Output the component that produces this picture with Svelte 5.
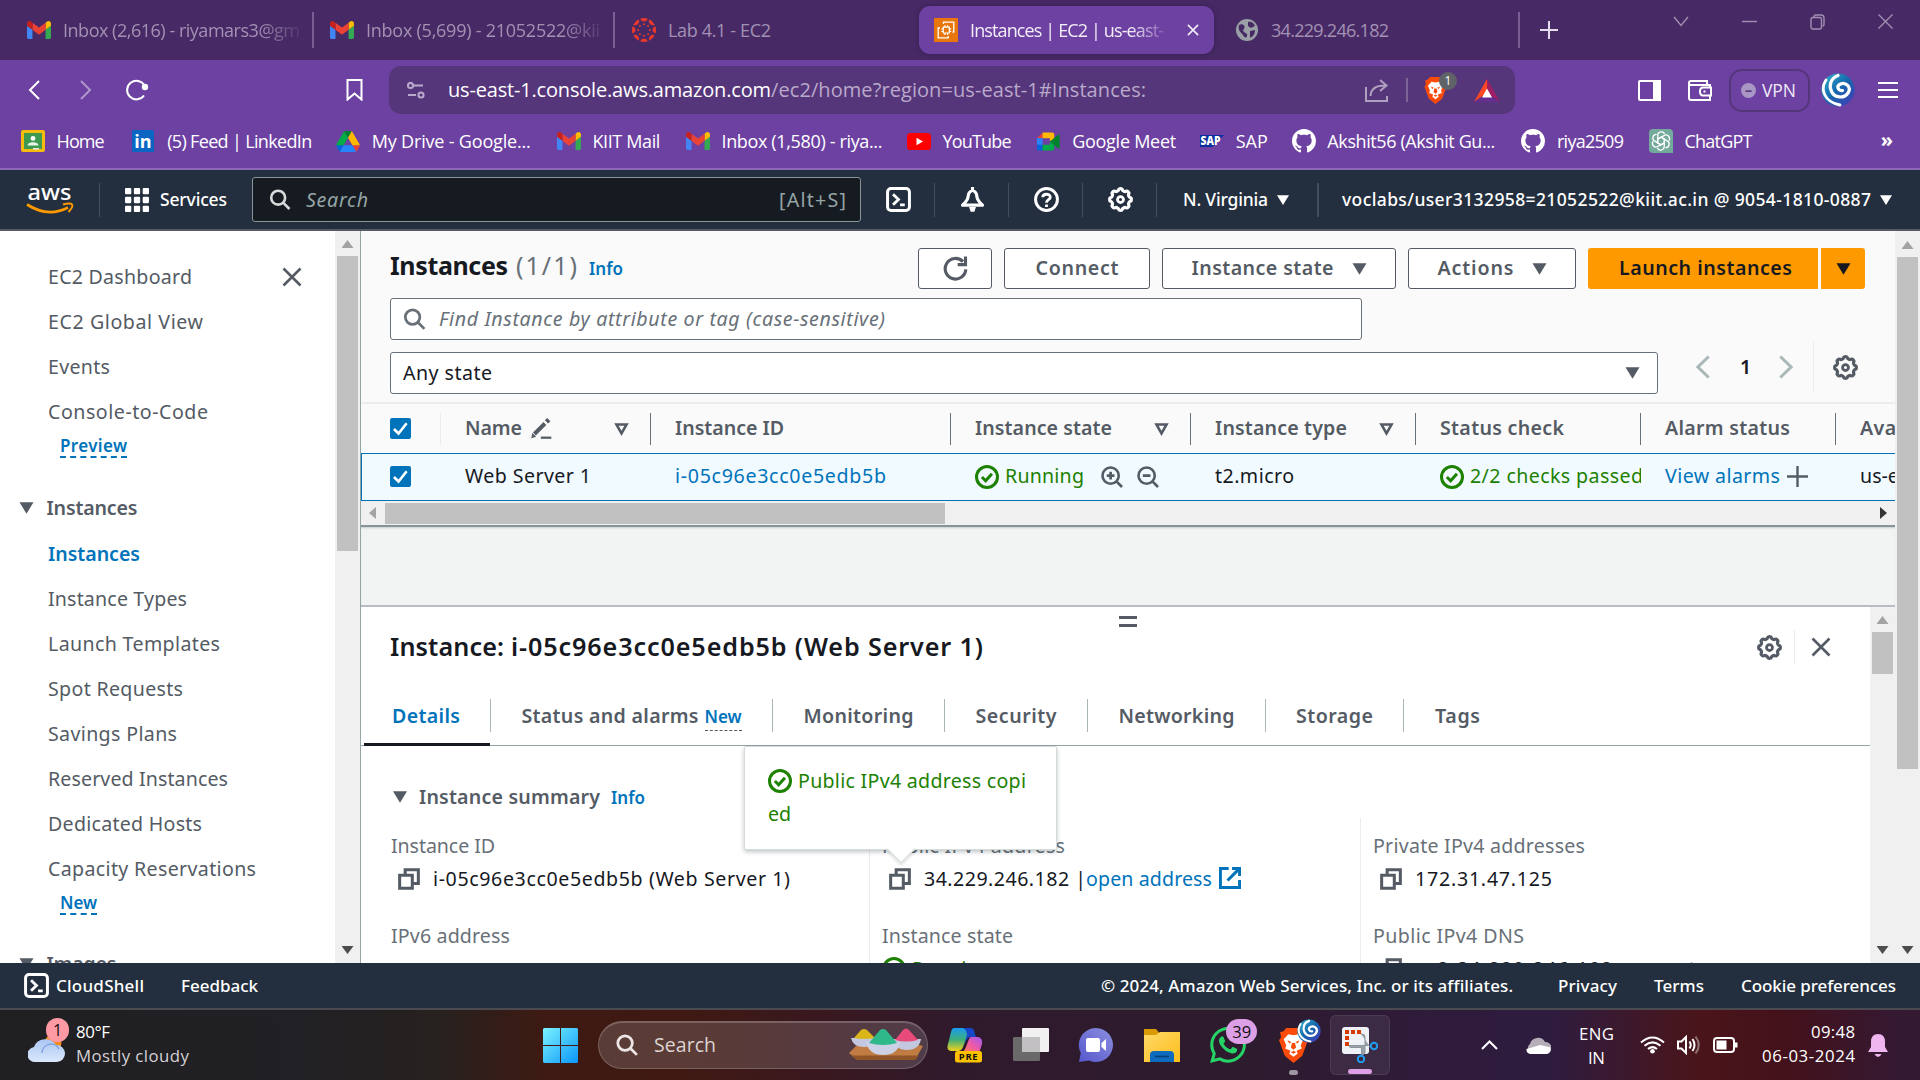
<script>
  // Spreads a label's letters so that it fills the given width.
  function fit(node, width) {
    const natural = node.getBoundingClientRect().width;
    const gaps = Math.max(1, node.textContent.length - 1);
    node.style.letterSpacing = (width - natural) / gaps + 'px';
    node.style.width = width + 'px';
  }

  // Scalloped gear outline with eight teeth, centred on 8,8.
  function gear() {
    let d = '';
    for (let i = 0; i < 96; i++) {
      const a = (i / 96) * Math.PI * 2;
      const r = 6.35 + 0.62 * Math.tanh(2 * Math.cos(8 * a));
      d += (i ? 'L' : 'M') + (8 + r * Math.cos(a)).toFixed(2) + ' ' + (8 + r * Math.sin(a)).toFixed(2);
    }
    return d + 'Z';
  }
  const gearPath = gear();
  const spokes = [0, 45, 90, 135, 180, 225, 270, 315];
  const petals = [0, 60, 120, 180, 240, 300];

  const bookmarks = [
    { icon: 'home', label: 'Home', w: 48, gap: 27 },
    { icon: 'linkedin', label: '(5) Feed | LinkedIn', w: 145, gap: 24 },
    { icon: 'drive', label: 'My Drive - Google...', w: 159, gap: 26 },
    { icon: 'gmail', label: 'KIIT Mail', w: 68, gap: 25.5 },
    { icon: 'gmail', label: 'Inbox (1,580) - riya...', w: 161, gap: 24.5 },
    { icon: 'youtube', label: 'YouTube', w: 69, gap: 25 },
    { icon: 'meet', label: 'Google Meet', w: 104, gap: 24 },
    { icon: 'sap', label: 'SAP', w: 32, gap: 24 },
    { icon: 'github', label: 'Akshit56 (Akshit Gu...', w: 168, gap: 26 },
    { icon: 'github', label: 'riya2509', w: 67, gap: 25 },
    { icon: 'chatgpt', label: 'ChatGPT', w: 68, gap: 0 }
  ];
  const navTop = [
    ['EC2 Dashboard', 144],
    ['EC2 Global View', 155],
    ['Events', 62],
    ['Console-to-Code', 160]
  ];
  const navItems = [
    ['Instance Types', 139],
    ['Launch Templates', 172],
    ['Spot Requests', 135],
    ['Savings Plans', 129],
    ['Reserved Instances', 180],
    ['Dedicated Hosts', 154],
    ['Capacity Reservations', 208]
  ];
  const tabs = [
    ['Monitoring', 110, 172],
    ['Security', 81, 143],
    ['Networking', 116, 178],
    ['Storage', 77, 138]
  ];
  const apps = ['copilot', 'taskview', 'chat', 'folder', 'whatsapp', 'brave', 'snip'];
</script>

{#snippet t(text, w, cls)}<span class="t {cls}" use:fit={w}>{text}</span>{/snippet}

{#snippet icon(name, w, h, cls)}
  <svg class="ic {cls}" width={w} height={h} viewBox="0 0 16 16" fill="none" stroke="currentColor" stroke-width="2">
    {#if name === 'gear'}
      <path d={gearPath} /><circle cx="8" cy="8" r="1.9" stroke-width="1.8" />
    {:else if name === 'search'}
      <circle cx="6.6" cy="6.6" r="5.3" /><path d="M10.4 10.4 15.2 15.2" />
    {:else if name === 'x'}
      <path d="M1.2 1.2 14.8 14.8M14.8 1.2 1.2 14.8" stroke-width="2.1" />
    {:else if name === 'down'}
      <path d="M0 1.5H16L8 14.5Z" fill="currentColor" stroke="none" />
    {:else if name === 'sort'}
      <path d="M2.2 2.8H13.8L8 13Z" stroke-width="2.9" />
    {:else if name === 'ok'}
      <circle cx="8" cy="8" r="7" /><path d="M4.6 8 7.1 10.5 11.3 5.8" />
    {:else if name === 'copy'}
      <path d="M1.2 5.2H10.4V14.8H1.2ZM5.2 5V1.2H14.8V11.3H10.6" stroke-width="2.2" />
    {:else if name === 'external'}
      <path d="M7 1H1V15H15V9.5M9.5 1H15V6.5M15 1 6.2 9.8" stroke-width="2.2" />
    {:else if name === 'zoomin' || name === 'zoomout'}
      <circle cx="7" cy="7" r="5.9" stroke-width="1.9" /><path d="M11.2 11.2 15.3 15.3M4.2 7H9.8" />
      {#if name === 'zoomin'}<path d="M7 4.2V9.8" />{/if}
    {:else if name === 'plus'}
      <path d="M8 0V16M0 8H16" stroke-width="1.8" />
    {:else if name === 'edit'}
      <path d="M2.6 12.2 10.6 4.2" stroke-width="3" /><path d="M11.8 3 13.6 1.2" stroke-width="3.4" /><path d="M.2 15.4 1 11.5 3.9 14.2Z" fill="currentColor" stroke="none" /><path d="M7.5 15H15.5" stroke-width="1.7" />
    {:else if name === 'refresh'}
      <path d="M14.6 8.6A6.6 6.6 0 1 1 12.8 3.6" /><path d="M14.4 .3V5.5H9.4" />
    {:else if name === 'left'}
      <path d="M11.8 1 4.6 8 11.8 15" />
    {:else if name === 'right'}
      <path d="M4.2 1 11.4 8 4.2 15" />
    {:else if name === 'shell'}
      <rect x="1" y="1" width="14" height="14" rx="2.2" stroke-width="1.9" /><path d="M4.5 4.6 8 8 4.5 11.4M9 11.4H12" stroke-width="1.8" />
    {:else if name === 'bell'}
      <path d="M8 0V2.4M8 2C5.8 3 5.2 4.6 5.2 6.2 5 8.6 3.6 9.8 1.6 11.6H14.4C12.4 9.8 11 8.6 10.8 6.2 10.8 4.6 10.2 3 8 2Z" stroke-width="2" stroke-linejoin="round" /><path d="M5.8 12.8H10.2L9.2 15.8H6.8Z" fill="currentColor" stroke="none" />
    {:else if name === 'help'}
      <circle cx="8" cy="8" r="7" stroke-width="1.9" /><path d="M5.6 6.6C5.6 4 10.4 4 10.4 6.5 10.4 8.2 8 8 8 10M8 11.2V12.8" stroke-width="1.8" />
    {:else if name === 'grid'}
      {#each [0, 5.9, 11.8] as y}{#each [0, 5.9, 11.8] as x}<rect {x} {y} width="4.2" height="4.2" rx=".7" fill="currentColor" stroke="none" />{/each}{/each}
    {:else if name === 'check'}
      <rect width="16" height="16" rx="1.6" fill="#0073bb" stroke="none" /><path d="M3 8.4 6.5 11.8 12.7 4" stroke="#fff" />
    {/if}
  </svg>
{/snippet}

{#snippet brand(name)}
  {#if name === 'gmail'}
    <svg class="ic" width="24" height="18" viewBox="52 42 88 66">
      <path fill="#4285f4" d="M58 108h14V74L52 59v43c0 3.32 2.69 6 6 6" /><path fill="#34a853" d="M120 108h14c3.32 0 6-2.69 6-6V59l-20 15" /><path fill="#fbbc04" d="M120 48v26l20-15v-8c0-7.42-8.47-11.65-14.4-7.2" /><path fill="#ea4335" d="M72 74V48l24 18 24-18v26L96 92" /><path fill="#c5221f" d="M52 51v8l20 15V48l-5.6-4.2c-5.94-4.45-14.4-.22-14.4 7.2" />
    </svg>
  {:else if name === 'home'}
    <svg class="ic" width="24" height="22" viewBox="0 0 24 22">
      <rect width="24" height="22" rx="2" fill="#f6bc0d" /><rect x="3" y="3" width="18" height="16" fill="#3d9a50" /><circle cx="12" cy="8.4" r="2.4" fill="#fff" /><path d="M6.5 15.5C6.5 11 17.5 11 17.5 15.5Z" fill="#e7f4e9" /><rect x="12" y="18" width="6" height="1.6" fill="#e8e8e8" />
    </svg>
  {:else if name === 'linkedin'}
    <svg class="ic" width="22" height="22" viewBox="0 0 22 22">
      <rect width="22" height="22" rx="1.5" fill="#0a66c2" /><text x="11" y="17.8" text-anchor="middle" font-family="Open Sans" font-weight="700" font-size="18" fill="#fff">in</text>
    </svg>
  {:else if name === 'drive'}
    <svg class="ic" width="24" height="21" viewBox="0 0 87.3 78">
      <path d="m6.6 66.85 3.85 6.65c.8 1.4 1.95 2.5 3.3 3.3l13.75-23.8h-27.5c0 1.55.4 3.1 1.2 4.5z" fill="#0066da" /><path d="m43.65 25-13.75-23.8c-1.35.8-2.5 1.9-3.3 3.3l-25.4 44a9.06 9.06 0 0 0-1.2 4.5h27.5z" fill="#00ac47" /><path d="m73.55 76.8c1.35-.8 2.5-1.9 3.3-3.3l1.6-2.75 7.65-13.25c.8-1.4 1.2-2.95 1.2-4.5h-27.502l5.852 11.5z" fill="#ea4335" /><path d="m43.65 25 13.75-23.8c-1.35-.8-2.9-1.2-4.5-1.2h-18.5c-1.6 0-3.15.45-4.5 1.2z" fill="#00832d" /><path d="m59.8 53h-32.3l-13.75 23.8c1.35.8 2.9 1.2 4.5 1.2h50.8c1.6 0 3.15-.45 4.5-1.2z" fill="#2684fc" /><path d="m73.4 26.5-12.7-22c-.8-1.4-1.95-2.5-3.3-3.3l-13.75 23.8 16.15 28h27.45c0-1.55-.4-3.1-1.2-4.5z" fill="#ffba00" />
    </svg>
  {:else if name === 'youtube'}
    <svg class="ic" width="24" height="17" viewBox="0 0 24 17"><rect width="24" height="17" rx="3.6" fill="#f00" /><path d="M9.5 4.8 16 8.5 9.5 12.2Z" fill="#fff" /></svg>
  {:else if name === 'meet'}
    <svg class="ic" width="23" height="19" viewBox="0 0 24 19">
      <path d="M0 6 5.8 0V6Z" fill="#ea4335" /><path d="M0 6H5.8V13H0Z" fill="#2684fc" /><path d="M0 13H5.8V19H2Q0 19 0 17Z" fill="#0066da" /><path d="M5.8 0H16Q18 0 18 2V7L13.5 9.5V6H5.8Z" fill="#ffba00" /><path d="M5.8 13H13.5V9.5L18 13V17Q18 19 16 19H5.8Z" fill="#00ac47" /><path d="M13.5 9.5 22 2.4Q23.6 1.8 23.6 3.2V15.8Q23.6 17.2 22 16.6Z" fill="#00832d" />
    </svg>
  {:else if name === 'sap'}
    <svg class="ic" width="24" height="12" viewBox="0 0 24 12"><path d="M0 0H24L12.5 12H0Z" fill="#0a2f9c" /><text x="0.5" y="10" font-family="Open Sans" font-weight="800" font-size="11.5" textLength="20" lengthAdjust="spacingAndGlyphs" fill="#fff">SAP</text></svg>
  {:else if name === 'github'}
    <svg class="ic" width="24" height="24" viewBox="0 0 16 16"><path fill="#fff" d="M8 0C3.58 0 0 3.58 0 8c0 3.54 2.29 6.53 5.47 7.59.4.07.55-.17.55-.38 0-.19-.01-.82-.01-1.49-2.01.37-2.53-.49-2.69-.94-.09-.23-.48-.94-.82-1.13-.28-.15-.68-.52-.01-.53.63-.01 1.08.58 1.23.82.72 1.21 1.87.87 2.33.66.07-.52.28-.87.51-1.07-1.78-.2-3.64-.89-3.64-3.95 0-.87.31-1.59.82-2.15-.08-.2-.36-1.02.08-2.12 0 0 .67-.21 2.2.82.64-.18 1.32-.27 2-.27s1.36.09 2 .27c1.53-1.04 2.2-.82 2.2-.82.44 1.1.16 1.92.08 2.12.51.56.82 1.27.82 2.15 0 3.07-1.87 3.75-3.65 3.95.29.25.54.73.54 1.48 0 1.07-.01 1.93-.01 2.2 0 .21.15.46.55.38A8.01 8.01 0 0 0 16 8c0-4.42-3.58-8-8-8" /></svg>
  {:else if name === 'chatgpt'}
    <svg class="ic" width="24" height="24" viewBox="0 0 24 24"><path d="M4 0H20Q24 0 24 4V24H4Q0 24 0 20V4Q0 0 4 0Z" fill="#74aa9c" />
      {#each petals as a}<path transform="rotate({a} 12 12)" d="M12 8.2 15.4 10.2V15.6M8.8 10V6.2A3.6 3.6 0 0 1 15.6 4.9" fill="none" stroke="#fff" stroke-width="1.3" />{/each}
    </svg>
  {:else if name === 'canvas'}
    <svg class="ic" width="24" height="24" viewBox="0 0 24 24">
      {#each spokes as a}<g transform="rotate({a} 12 12)" fill="#e9392c"><path d="M8.2 .7Q12-.7 15.8 .7A4 4 0 0 1 8.2 .7Z" /><circle cx="12" cy="6.2" r="1" /></g>{/each}
    </svg>
  {:else if name === 'ec2'}
    <svg class="ic" width="24" height="24" viewBox="0 0 24 24"><rect width="24" height="24" fill="#e8760c" /><path d="M9.5 6V4.2H19.8V14H18.5M6 10H4.2V19.8H14.2V18" fill="none" stroke="#fff" stroke-width="1.3" /><path d="M9.3 9.2H15.3V15H9.3ZM11 7.2V9M13.6 7.2V9M11 15V17M13.6 15V17M15.3 10.8H17.2M15.3 13.4H17.2M7.4 10.8H9.3M7.4 13.4H9.3" fill="none" stroke="#fff" stroke-width="1.2" /></svg>
  {:else if name === 'globe'}
    <svg class="ic" width="22" height="22" viewBox="0 0 22 22"><circle cx="11" cy="11" r="11" fill="#9aa0a6" /><path d="M3 6C6 4 9 6 8.5 8.5S6 11 8 13 12 14 11 17 8 18 7 16 3 13 2.6 9ZM12 3C15 2 18 4 19 7L15 9 12 7ZM14 12 19 11C19 15 17 18 14 18.6Z" fill="#472a65" /></svg>
  {:else if name === 'braveface'}
    <svg class="ic" width="23" height="27" viewBox="0 0 28 34"><path d="M7 0H21L24 3.5 27 4 26 9 28 12 22.5 27 14 34 5.5 27 0 12 2 9 1 4 4 3.5Z" fill="#fb4b0b" /><path d="M14 7 19 6 23.5 11 21 17 22 20 17 22 18 25 14 28 10 25 11 22 6 20 7 17 4.5 11 9 6Z" fill="#fff" /><path d="M8 12 12 13.5 10 15ZM20 12 16 13.5 18 15ZM12.5 14.5H15.5L16.5 19 14 21 11.5 19ZM11.5 23.5 14 22 16.5 23.5 14 25Z" fill="#fb4b0b" /></svg>
  {:else if name === 'swirl'}
    <svg class="ic" width="34" height="34" viewBox="0 0 34 34"><defs><linearGradient id="sw" x1="0" y1="0" x2="1" y2="1"><stop offset="0" stop-color="#35b5cf" /><stop offset=".5" stop-color="#1468ad" /><stop offset="1" stop-color="#4b35b8" /></linearGradient></defs><circle cx="17" cy="17" r="16.6" fill="url(#sw)" /><path d="M17 2.5C10 5 7.5 12 10.5 18.5S23 26 27 20 24.5 8.5 19.5 11 17.5 18 21.5 17.5" fill="none" stroke="#fff" stroke-width="3.2" stroke-linecap="round" /><path d="M5 7C-1 16 3 29 19 32" fill="none" stroke="#fff" stroke-width="2.8" stroke-linecap="round" /></svg>
  {/if}
{/snippet}

{#snippet app(name)}
  {#if name === 'copilot'}
    <svg width="36" height="36" viewBox="0 0 36 36"><defs><linearGradient id="cp1" x1="0" y1="0" x2="0" y2="1"><stop offset="0" stop-color="#1b9cf0" /><stop offset=".5" stop-color="#3cae7a" /><stop offset="1" stop-color="#f2d21c" /></linearGradient><linearGradient id="cp2" x1="1" y1="0" x2="0" y2="1"><stop offset="0" stop-color="#a259f0" /><stop offset=".5" stop-color="#ef5aa6" /><stop offset="1" stop-color="#ff8a3c" /></linearGradient></defs>
      <path d="M7 1H24L16 20Q14.5 24 11 24H4Q-1 23 1 17L4 5Q5 1 7 1Z" fill="url(#cp1)" /><path d="M16 1H24Q27 1 28 7L29 10H23Q20 10 16 20L20 8Q20 3 16 1Z" fill="#1746c8" /><path d="M24 10H31Q36 11 35 17L32 26H14Q17 25 19 20L22 12Q23 10 24 10Z" fill="url(#cp2)" /><rect x="8" y="24" width="27" height="11.5" rx="2.5" fill="#fdc100" /><text x="21.5" y="33" text-anchor="middle" font-family="Open Sans" font-weight="700" font-size="9.5" letter-spacing=".6" fill="#111">PRE</text></svg>
  {:else if name === 'taskview'}
    <svg width="36" height="36" viewBox="0 0 36 36"><rect y="10" width="27" height="24" rx="1" fill="#6a6a6a" /><rect x="9" y="1" width="27" height="24" rx="1" fill="#f1f1f1" /><rect x="9" y="10" width="18" height="15" fill="#c2c0c2" /></svg>
  {:else if name === 'chat'}
    <svg width="36" height="36" viewBox="0 0 36 36"><defs><linearGradient id="ch" x1="0" y1="1" x2="1" y2="0"><stop offset="0" stop-color="#5558cc" /><stop offset="1" stop-color="#8c8fe0" /></linearGradient></defs><path d="M18 1A17 17 0 1 1 11 33.5L1 35 2.8 26A17 17 0 0 1 18 1Z" fill="url(#ch)" /><rect x="8" y="11" width="14" height="14" rx="2" fill="#fff" /><path d="M23.5 16 28 12V24L23.5 20Z" fill="#fff" /></svg>
  {:else if name === 'folder'}
    <svg width="36" height="36" viewBox="0 0 36 36"><defs><linearGradient id="fo" x1="0" y1="0" x2="1" y2="1"><stop offset="0" stop-color="#ffd968" /><stop offset="1" stop-color="#fdbd1c" /></linearGradient></defs><path d="M0 2H12L15 5.5V12H0Z" fill="#d99a05" /><path d="M0 8H12L16 5H36V35H0Z" fill="url(#fo)" /><path d="M6 35V28Q6 24 10 24H26Q30 24 30 28V35Z" fill="#0d6cbd" /><path d="M11 29.5H25" stroke="#0a3f78" stroke-width="1.6" /></svg>
  {:else if name === 'whatsapp'}
    <svg width="36" height="36" viewBox="0 0 24 24"><path fill="#25d366" d="M17.472 14.382c-.297-.149-1.758-.867-2.03-.967-.273-.099-.471-.148-.67.15-.197.297-.767.966-.94 1.164-.173.199-.347.223-.644.075-.297-.15-1.255-.463-2.39-1.475-.883-.788-1.48-1.761-1.653-2.059-.173-.297-.018-.458.13-.606.134-.133.298-.347.446-.52.149-.174.198-.298.298-.497.099-.198.05-.371-.025-.52-.075-.149-.669-1.612-.916-2.207-.242-.579-.487-.5-.669-.51-.173-.008-.371-.01-.57-.01-.198 0-.52.074-.792.372-.272.297-1.04 1.016-1.04 2.479 0 1.462 1.065 2.875 1.213 3.074.149.198 2.096 3.2 5.077 4.487.709.306 1.262.489 1.694.625.712.227 1.36.195 1.871.118.571-.085 1.758-.719 2.006-1.413.248-.694.248-1.289.173-1.413-.074-.124-.272-.198-.57-.347m-5.421 7.403h-.004a9.87 9.87 0 01-5.031-1.378l-.361-.214-3.741.982.998-3.648-.235-.374a9.86 9.86 0 01-1.51-5.26c.001-5.45 4.436-9.884 9.888-9.884 2.64 0 5.122 1.03 6.988 2.898a9.825 9.825 0 012.893 6.994c-.003 5.45-4.437 9.884-9.885 9.884m8.413-18.297A11.815 11.815 0 0012.05 0C5.495 0 .16 5.335.157 11.892c0 2.096.547 4.142 1.588 5.945L.057 24l6.305-1.654a11.882 11.882 0 005.683 1.448h.005c6.554 0 11.89-5.335 11.893-11.893a11.821 11.821 0 00-3.48-8.413Z" /></svg>
    <span class="count">39</span>
  {:else if name === 'brave'}
    <span class="bigbrave">{@render brand('braveface')}</span><span class="miniswirl">{@render brand('swirl')}</span><i class="dot"></i>
  {:else}
    <svg width="36" height="36" viewBox="0 0 36 36"><rect width="27" height="27" rx="3" fill="#eef2f6" /><g fill="#d83b01"><rect x="3" y="3" width="4" height="4" /><rect x="9" y="3" width="4" height="4" /><rect x="15" y="3" width="4" height="4" /><rect x="3" y="9" width="4" height="4" /><rect x="3" y="15" width="4" height="4" /></g><path d="M19 7H20Q23 7 23 10V26L19.5 29V20.5H9Q7 20.5 7 18.5H27L29 21" fill="#9aa1a8" stroke="#8d959c" stroke-width="1" /><circle cx="32" cy="19" r="3.2" fill="none" stroke="#1f9df1" stroke-width="2" /><circle cx="19" cy="32" r="3.2" fill="none" stroke="#1f9df1" stroke-width="2" /></svg>
    <i class="dot wide"></i>
  {/if}
{/snippet}

<div class="screen">
  <div class="tabbar">
    <div class="btab first">{@render brand('gmail')}<span class="fade">{@render t('Inbox (2,616) - riyamars3@gm', 237, 'w')}</span></div>
    <div class="btab second">{@render brand('gmail')}<span class="fade">{@render t('Inbox (5,699) - 21052522@kii', 234, 'w')}</span></div>
    <div class="btab third">{@render brand('canvas')}{@render t('Lab 4.1 - EC2', 103, 'w')}</div>
    <div class="btab active">{@render brand('ec2')}<span class="fade short">{@render t('Instances | EC2 | us-east-', 194, 'w')}</span>{@render icon('x', 12, 12, '')}</div>
    <div class="btab fifth">{@render brand('globe')}{@render t('34.229.246.182', 118, 'w')}</div>
    <div class="newtab">{@render icon('plus', 18, 18, '')}</div>
    <div class="winctl">
      <svg width="16" height="11" viewBox="0 0 16 11"><path d="M1 1 8 9.5 15 1" /></svg>
      <svg width="15" height="11" viewBox="0 0 15 11"><path d="M0 5.5H15" /></svg>
      <svg width="15" height="16" viewBox="0 0 15 16"><path d="M4 3.5V2.5Q4 1 5.5 1H11Q14 1 14 4V10.5Q14 12 12.5 12" /><rect x="1" y="3.5" width="10.5" height="11.5" rx="2" /></svg>
      <svg width="15" height="15" viewBox="0 0 15 15"><path d="M.5.5 14.5 14.5M14.5.5.5 14.5" /></svg>
    </div>
  </div>

  <div class="toolbar">
    <div class="tools">
      <svg class="back" width="12" height="20" viewBox="0 0 12 20"><path d="M11 1 2 10 11 19" /></svg>
      <svg class="fwd" width="12" height="20" viewBox="0 0 12 20"><path d="M1 1 10 10 1 19" /></svg>
      <svg class="reload" width="24" height="22" viewBox="0 0 24 22"><path d="M19 16.5A9.3 9.3 0 1 1 19.5 6.5" /><circle cx="20" cy="8" r="3.2" fill="#fff" stroke="none" /></svg>
      <svg class="mark" width="17" height="22" viewBox="0 0 17 22"><path d="M1.5 1H15.5V20.5L8.5 14.5 1.5 20.5Z" /></svg>
      <div class="url">
        <svg class="site" width="18" height="17" viewBox="0 0 18 17"><circle cx="3.5" cy="3.5" r="2.6" /><path d="M6.5 3.5H16M1 13H9" /><circle cx="14" cy="13" r="2.6" /></svg>
        {@render t('us-east-1.console.aws.amazon.com', 323, 'u strong')}{@render t('/ec2/home?region=us-east-1#Instances:', 375, 'u')}
        <svg class="share" width="24" height="23" viewBox="0 0 24 23"><path d="M1 8V22H22V17M5.5 17Q6 6.5 20 6.5M15 1 21.5 6.5 15 12" /></svg>
        <i class="usep"></i>
        <span class="shield">{@render brand('braveface')}<b>1</b></span>
        <svg class="bat" width="26" height="23" viewBox="0 0 26 23"><path d="M13 0 0 23 13 14Z" fill="#ff4724" /><path d="M13 0 26 23 13 14Z" fill="#9e1f63" /><path d="M0 23H26L13 14Z" fill="#662d91" /><path d="M13 9.5 18 18.5H8Z" fill="#fff" /></svg>
      </div>
      <svg class="side" width="23" height="21" viewBox="0 0 23 21"><rect x="1" y="1" width="21" height="19" rx="1" /><path d="M16 1H22V20H16Z" fill="#fff" /></svg>
      <svg class="wallet" width="24" height="21" viewBox="0 0 24 21"><path d="M22 7V5H3Q1 5 1 3T3 1H19V4M1 3V18Q1 20 3 20H22V16" /><path d="M23 7.5H15Q12 7.5 12 11.5T15 15.5H23ZM15.5 11.5H17.5" /></svg>
      <div class="vpn"><i>–</i>{@render t('VPN', 34, 'v')}</div>
      <span class="avatar">{@render brand('swirl')}</span>
      <svg class="menu" width="20" height="16" viewBox="0 0 20 16"><path d="M0 1H20M0 8H20M0 15H20" /></svg>
    </div>
    <div class="marks">
      {#each bookmarks as b}
        <div class="bm" style:margin-right="{b.gap}px"><span class="bi">{@render brand(b.icon)}</span>{@render t(b.label, b.w, 'w')}</div>
      {/each}
      <span class="more">»</span>
    </div>
  </div>

  <div class="awsnav">
    <svg class="logo" width="48" height="30" viewBox="0 0 48 30"><text x="1.5" y="15" font-family="Noto Sans" font-size="22" font-weight="500" textLength="44" lengthAdjust="spacingAndGlyphs" fill="#fff">aws</text><path d="M1 19.5Q22 33 42 22.5" fill="none" stroke="#f90" stroke-width="2.8" /><path d="M37 19.5Q44.5 17.5 46 19.5T42.5 27" fill="none" stroke="#f90" stroke-width="2" /></svg>
    <i class="nsep n1"></i>
    <span class="g">{@render icon('grid', 24, 24, '')}</span>
    {@render t('Services', 67, 'nav')}
    <div class="navsearch">{@render icon('search', 22, 21, '')}{@render t('Search', 62, 'it')}{@render t('[Alt+S]', 67, 'alt')}</div>
    <span class="nicon c1">{@render icon('shell', 25, 25, '')}</span>
    <i class="nsep"></i>
    <span class="nicon">{@render icon('bell', 25, 25, '')}</span>
    <i class="nsep"></i>
    <span class="nicon">{@render icon('help', 25, 25, '')}</span>
    <i class="nsep"></i>
    <span class="nicon">{@render icon('gear', 25, 25, '')}</span>
    <i class="nsep"></i>
    <div class="region">{@render t('N. Virginia', 85, 'nav')}{@render icon('down', 12, 12, '')}</div>
    <i class="nsep bold"></i>
    <div class="account">{@render t('voclabs/user3132958=21052522@kiit.ac.in @ 9054-1810-0887', 529, 'nav')}{@render icon('down', 12, 12, '')}</div>
  </div>

  <div class="body">
    <nav class="sidebar">
      <div class="links">
        {#each navTop as [label, w], i}
          <div class="link">{@render t(label, w, '')}{#if i === 0}{@render icon('x', 20, 20, 'close')}{/if}</div>
        {/each}
        <div class="tag">{@render t('Preview', 67, 'sm')}</div>
        <div class="section">{@render icon('down', 15, 14, '')}{@render t('Instances', 91, 'b')}</div>
        <div class="link current">{@render t('Instances', 92, 'b')}</div>
        {#each navItems as [label, w]}
          <div class="link">{@render t(label, w, '')}</div>
        {/each}
        <div class="tag">{@render t('New', 37, 'sm')}</div>
        <div class="section images">{@render icon('down', 15, 14, '')}{@render t('Images', 70, 'b')}</div>
      </div>
      <div class="vscroll s1"><i class="up"></i><i class="thumb"></i><i class="dn"></i></div>
    </nav>

    <main>
      <section class="listhead">
        <div class="titlerow">
          {@render t('Instances', 118, 'h1')}{@render t('(1/1)', 61, 'h1 cnt')}{@render t('Info', 34, 'sm blue')}
          <div class="btns">
            <div class="btn r">{@render icon('refresh', 25, 25, '')}</div>
            <div class="btn c">{@render t('Connect', 83, 'b')}</div>
            <div class="btn s">{@render t('Instance state', 142, 'b')}{@render icon('down', 15, 14, '')}</div>
            <div class="btn a">{@render t('Actions', 76, 'b')}{@render icon('down', 15, 14, '')}</div>
            <div class="btn launch">{@render t('Launch instances', 173, 'b')}</div>
            <div class="btn split">{@render icon('down', 15, 14, '')}</div>
          </div>
        </div>
        <div class="field find">{@render icon('search', 23, 22, '')}{@render t('Find Instance by attribute or tag (case-sensitive)', 446, 'it')}</div>
        <div class="filterrow">
          <div class="field state">{@render t('Any state', 89, '')}{@render icon('down', 15, 14, '')}</div>
          <div class="pager">{@render icon('left', 24, 24, 'dim')}{@render t('1', 9, 'b')}{@render icon('right', 24, 24, 'dim')}<i></i>{@render icon('gear', 25, 25, '')}</div>
        </div>
      </section>

      <div class="row thead">
        <div class="cell k">{@render icon('check', 21, 21, '')}</div>
        <div class="cell">{@render t('Name', 57, 'b')}<span class="pen">{@render icon('edit', 21, 21, '')}</span>{@render icon('sort', 15, 14, 'sort')}</div>
        <div class="cell">{@render t('Instance ID', 109, 'b')}</div>
        <div class="cell">{@render t('Instance state', 137, 'b')}{@render icon('sort', 15, 14, 'sort')}</div>
        <div class="cell">{@render t('Instance type', 132, 'b')}{@render icon('sort', 15, 14, 'sort')}</div>
        <div class="cell">{@render t('Status check', 124, 'b')}</div>
        <div class="cell">{@render t('Alarm status', 125, 'b')}</div>
        <div class="cell">{@render t('Availability Zone', 165, 'b')}</div>
      </div>
      <div class="row trow">
        <div class="cell k">{@render icon('check', 21, 21, '')}</div>
        <div class="cell">{@render t('Web Server 1', 126, '')}</div>
        <div class="cell blue">{@render t('i-05c96e3cc0e5edb5b', 211, '')}</div>
        <div class="cell green">{@render icon('ok', 24, 24, '')}{@render t('Running', 79, 'after')}<span class="zi">{@render icon('zoomin', 22, 22, '')}</span><span class="zo">{@render icon('zoomout', 22, 22, '')}</span></div>
        <div class="cell">{@render t('t2.micro', 79, '')}</div>
        <div class="cell green">{@render icon('ok', 24, 24, '')}{@render t('2/2 checks passed', 173, 'after')}</div>
        <div class="cell blue">{@render t('View alarms', 115, '')}<span class="pl">{@render icon('plus', 21, 21, '')}</span></div>
        <div class="cell">{@render t('us-east-1', 84, '')}</div>
      </div>
      <div class="hscroll"><i class="lf"></i><i class="hthumb"></i><i class="rt"></i></div>
      <div class="spacer"></div>

      <section class="panel">
        <div class="pmain">
          <div class="handle"><i></i><i></i></div>
          <div class="ptitle">{@render t('Instance:', 114, 'h2')}{@render t('i-05c96e3cc0e5edb5b (Web Server 1)', 472, 'h2 iid')}<span class="pg">{@render icon('gear', 25, 25, '')}</span><i></i>{@render icon('x', 20, 20, '')}</div>
          <div class="ptabs">
            <div class="ptab on">{@render t('Details', 68, 'b')}</div>
            <div class="ptab sa">{@render t('Status and alarms', 177, 'b')}<span class="newtag">{@render t('New', 37, 'sm')}</span></div>
            {#each tabs as [label, w, full]}
              <div class="ptab" style:width="{full}px">{@render t(label, w, 'b')}</div>
            {/each}
            <div class="ptab last">{@render t('Tags', 45, 'b')}</div>
          </div>
          <div class="summary">{@render icon('down', 16, 14, '')}{@render t('Instance summary', 181, 'b')}{@render t('Info', 34, 'sm blue')}</div>
          <div class="cols">
            <div class="col">
              <div class="lab">{@render t('Instance ID', 104, '')}</div>
              <div class="val">{@render icon('copy', 22, 22, 'grey')}{@render t('i-05c96e3cc0e5edb5b (Web Server 1)', 357, '')}</div>
              <div class="lab two">{@render t('IPv6 address', 119, '')}</div>
            </div>
            <div class="col">
              <div class="lab">{@render t('Public IPv4 address', 183, '')}</div>
              <div class="val">{@render icon('copy', 22, 22, 'grey')}{@render t('34.229.246.182 |', 162, '')}<span class="blue open">{@render t('open address', 126, '')}{@render icon('external', 22, 22, '')}</span></div>
              <div class="lab two">{@render t('Instance state', 131, '')}</div>
              <div class="val green st">{@render icon('ok', 24, 24, '')}{@render t('Running', 79, 'after')}</div>
            </div>
            <div class="col">
              <div class="lab">{@render t('Private IPv4 addresses', 212, '')}</div>
              <div class="val">{@render icon('copy', 22, 22, 'grey')}{@render t('172.31.47.125', 137, '')}</div>
              <div class="lab two">{@render t('Public IPv4 DNS', 151, '')}</div>
              <div class="val st">{@render icon('copy', 22, 22, 'grey')}{@render t('ec2-34-229-246-182.compute-', 300, '')}</div>
            </div>
          </div>
        </div>
        <div class="vscroll s3"><i class="up"></i><i class="thumb"></i><i class="dn"></i></div>
      </section>

      <div class="toast">
        <div class="line">{@render icon('ok', 24, 24, '')}{@render t('Public IPv4 address copi', 228, 'after')}</div>
        <div class="line">{@render t('ed', 23, '')}</div>
      </div>
    </main>
    <div class="vscroll s2"><i class="up"></i><i class="thumb"></i><i class="dn"></i></div>
  </div>

  <footer>
    {@render icon('shell', 25, 25, '')}{@render t('CloudShell', 88, 'f f1')}{@render t('Feedback', 77, 'f f2')}
    <div class="legal">{@render t('© 2024, Amazon Web Services, Inc. or its affiliates.', 412, 'f')}{@render t('Privacy', 59, 'f f3')}{@render t('Terms', 50, 'f f4')}{@render t('Cookie preferences', 155, 'f f5')}</div>
  </footer>

  <div class="taskbar">
    <div class="weather">
      <svg width="38" height="42" viewBox="0 0 38 42"><defs><linearGradient id="cl" x1="0" y1="0" x2="0" y2="1"><stop offset="0" stop-color="#a9c6f2" /><stop offset="1" stop-color="#dbe8fc" /></linearGradient></defs><circle cx="25" cy="19" r="8.5" fill="#f28a1c" /><path d="M8 38A7.5 7.5 0 0 1 6 23 12 11 0 0 1 28 21 8.5 8.5 0 0 1 29 38Z" fill="url(#cl)" /><path d="M14 29A9 9 0 0 1 31 25" fill="none" stroke="#7fa3e4" stroke-width="1.5" /></svg>
      <b>1</b>
      <div>{@render t('80°F', 34, 'tb')}{@render t('Mostly cloudy', 113, 'tb dimt')}</div>
    </div>
    <svg class="win" width="35" height="35" viewBox="0 0 35 35"><defs><linearGradient id="wn" x1="0" y1="0" x2="1" y2="1"><stop offset="0" stop-color="#7cf3ff" /><stop offset="1" stop-color="#0a95f8" /></linearGradient></defs><path d="M1 0H17V17H0V1ZM18 0H34L35 1V17H18ZM0 18H17V35H1L0 34ZM18 18H35V34L34 35H18Z" fill="url(#wn)" /></svg>
    <div class="tsearch">
      {@render icon('search', 22, 22, '')}{@render t('Search', 62, 'ts')}
      <svg class="bowls" width="74" height="34" viewBox="0 0 74 34"><path d="M8 17H70L74 18 66 32H8L0 25Z" fill="#c07c43" /><path d="M2 27.5H70L66 32H8Z" fill="#8f5427" /><path d="M2 10H28Q27 19 15 19 4 19 2 10Z" fill="#c3c7df" /><path d="M5 10 12 2Q15 0 18 2L26 10Q15 12 5 10Z" fill="#d9b51a" /><path d="M44 11H72Q70 22 58 22 46 22 44 11Z" fill="#c3c7df" /><path d="M46 12 54 2Q57-1 60 2L69 12Q57 15 46 12Z" fill="#e84a79" /><path d="M17 14H51Q49 27 34 27 20 27 17 14Z" fill="#cdd1e6" /><path d="M20 15 31 2Q34 0 37 2L48 15Q34 19 20 15Z" fill="#2fb98a" /></svg>
    </div>
    <div class="apps">{#each apps as a}<div class="app {a}">{@render app(a)}</div>{/each}</div>
    <div class="tray">
      <svg class="chev" width="17" height="10" viewBox="0 0 17 10"><path d="M1 9 8.5 1.5 16 9" /></svg>
      <svg class="cloud" width="25" height="19" viewBox="0 0 25 19"><path d="M5 18A6 6 0 0 1 4 8 8 7.5 0 0 1 19 6 6 6 0 0 1 20 18Z" fill="#b5aeb8" stroke="none" /><path d="M4 18Q0 17 .5 13L14 9 24.5 11.5Q25 18 20 18Z" fill="#fff" stroke="none" /></svg>
      <div class="lang">{@render t('ENG', 35, 'tb')}{@render t('IN', 17, 'tb')}</div>
      <svg class="wifi" width="25" height="18" viewBox="0 0 25 18"><path d="M1 6.5Q12.5-3.5 24 6.5M4.5 9.8Q12.5 3 20.5 9.8M8 13Q12.5 9.3 17 13" /><circle cx="12.5" cy="15.3" r="2.3" fill="#fff" stroke="none" /></svg>
      <svg class="vol" width="24" height="20" viewBox="0 0 24 20"><path d="M1 6.5H4.5L9 2V18L4.5 13.5H1ZM12.5 6.5Q15 10 12.5 13.5M15.5 4Q19.5 10 15.5 16" /><path d="M18.5 1.5Q25 10 18.5 18.5" opacity=".4" /></svg>
      <svg class="batt" width="25" height="16" viewBox="0 0 25 16"><rect x="1" y="1" width="20" height="14" rx="3" /><rect x="3.5" y="3.5" width="10" height="9" fill="#fff" stroke="none" /><path d="M23 5.5V10.5" stroke-width="3" /></svg>
      <div class="clock">{@render t('09:48', 44, 'tb')}{@render t('06-03-2024', 93, 'tb')}</div>
      <svg class="note" width="20" height="23" viewBox="0 0 20 23"><path d="M10 0Q17 0 17 8V13L20 18H0L3 13V8Q3 0 10 0ZM6.5 20H13.5Q12 23 10 23T6.5 20Z" fill="#efb6f0" stroke="none" /></svg>
    </div>
  </div>
</div>

<style>
  :global(body) { overflow: hidden; }
  .screen { width: 1920px; height: 1080px; overflow: hidden; display: flex; flex-direction: column; font-family: 'Noto Sans', sans-serif; font-size: 19.6px; line-height: 24px; color: #16191f; }
  .screen * { box-sizing: border-box; }
  .screen i { font-style: normal; flex: none; }
  .t { display: block; flex: none; width: max-content; white-space: pre; }
  .ic { display: block; flex: none; }
  .b { font-weight: 600; }
  .sm { font-size: 17px; font-weight: 600; }
  .blue { color: #0073bb; }
  .green { color: #1d8102; }
  .it { font-style: italic; }
  .w, .u, .v, .tb, .ts { font-family: 'Open Sans', sans-serif; }

  /* browser tabs */
  .tabbar { height: 60px; flex: none; background: #472a65; display: flex; align-items: center; color: #a391b4; }
  .w { font-size: 18px; padding-bottom: 1px; }
  .btab { display: flex; align-items: center; height: 48px; flex: none; }
  .fade { width: 238px; margin-left: 12px; mask-image: linear-gradient(90deg, #000 82%, transparent 102%); }
  .first { width: 314px; padding-left: 27px; border-right: 2px solid #7a5f95; height: 36px; }
  .second { width: 301px; padding-left: 16px; border-right: 2px solid #7a5f95; height: 36px; }
  .third { width: 304px; padding-left: 17px; gap: 12px; }
  .active { width: 295px; padding-left: 15px; background: #6d41a1; border-radius: 11px; color: #f3eef8; box-shadow: 0 0 5px #371d52; }
  .active .fade { width: 196px; margin-right: 21px; }
  .fifth { width: 306px; padding-left: 22px; gap: 13px; border-right: 2px solid #7a5f95; height: 36px; }
  .newtab { padding-left: 20px; color: #e5dcee; }
  .winctl { margin-left: auto; display: flex; align-items: center; gap: 53px; padding-right: 27px; margin-bottom: 17px; }
  .winctl svg { fill: none; stroke: #a08fb2; stroke-width: 1.4; }

  /* toolbar */
  .toolbar { height: 110px; flex: none; background: #6d41a1; border-bottom: 2px solid #8f68b9; display: flex; flex-direction: column; }
  .tools { height: 60px; display: flex; align-items: center; }
  .tools svg { display: block; flex: none; }
  .tools > svg, .site, .share { fill: none; stroke: #fff; stroke-width: 2; }
  .back { margin-left: 28px; }
  .fwd { margin-left: 40px; opacity: .45; }
  .reload { margin-left: 33px; }
  .mark { margin-left: 197px; }
  .url { margin-left: 26px; width: 1126px; height: 48px; border-radius: 12px; background: #56367a; display: flex; align-items: center; padding-left: 18px; }
  .u { font-size: 20px; color: #b9a9cb; }
  .strong { color: #fff; margin-left: 23px; }
  .url .site { stroke: #b9a9cb; }
  .url .share { margin-left: 219px; stroke: #b0a0c0; }
  .usep { width: 2px; height: 24px; background: #7d6598; margin: 0 16px 0 17px; }
  .shield { position: relative; }
  .shield b { position: absolute; left: 15px; top: -5px; width: 18px; height: 18px; border-radius: 9px; background: #5f6368; color: #fff; font: 12px/18px 'Open Sans', sans-serif; text-align: center; }
  .bat { margin-left: 27px; }
  .side { margin-left: 123px; }
  .wallet { margin-left: 27px; }
  .vpn { margin-left: 17px; width: 81px; height: 43px; border: 2px solid #56367a; border-radius: 13px; display: flex; align-items: center; padding-left: 10px; gap: 6px; color: #efe9f6; }
  .vpn i { width: 15px; height: 15px; border-radius: 8px; background: #a896c4; color: #56367a; line-height: 13px; text-align: center; font-weight: 700; font-size: 14px; }
  .v { font-size: 17.5px; padding-bottom: 1px; }
  .avatar { margin: 0 23px 0 11px; }
  .marks { height: 42px; display: flex; align-items: center; padding-left: 21px; color: #fff; }
  .bm { display: flex; align-items: center; gap: 11.6px; flex: none; }
  .bi { width: 24px; display: flex; }
  .more { margin: 0 27px 3px auto; font-weight: 700; font-size: 20px; }

  /* console nav */
  .awsnav { height: 61px; flex: none; background: #232f3e; border-bottom: 2px solid #545b64; display: flex; align-items: center; color: #fff; }
  .logo { margin: 0 0 0 26px; }
  .nsep { width: 1px; height: 34px; background: #414d5c; }
  .n1 { margin-left: 25px; }
  .g { margin: 0 11px 0 25px; }
  .nav { font-size: 17.5px; font-weight: 500; padding-bottom: 1px; }
  .navsearch { margin-left: 25px; width: 609px; height: 45px; border: 1px solid #879596; border-radius: 3px; background: #161b22; display: flex; align-items: center; padding: 0 14px 0 16px; color: #d5dbdb; }
  .navsearch .it { margin-left: 15px; color: #95a5a6; }
  .alt { margin-left: auto; color: #95a5a6; }
  .nicon { width: 72px; display: flex; justify-content: center; margin-left: 1px; }
  .c1 { width: 25px; margin: 0 23px 0 25px; }
  .region { display: flex; align-items: center; gap: 9px; margin-left: 26px; width: 134px; }
  .bold { width: 2px; }
  .account { display: flex; align-items: center; gap: 9px; margin-left: 23px; }

  .body { height: 732px; flex: none; display: flex; overflow: hidden; }
  .sidebar { width: 361px; flex: none; display: flex; border-right: 1px solid #95a5a6; color: #545b64; overflow: hidden; }
  .links { width: 335px; flex: none; padding-top: 23px; }
  .link { height: 45px; padding: 0 33px 0 48px; display: flex; align-items: center; justify-content: space-between; }
  .link.current { color: #0073bb; padding-top: 1px; height: 46px; }
  .tag { height: 24px; width: fit-content; margin-left: 60px; border-bottom: 2px dashed #0073bb; color: #0073bb; }
  .section { height: 45px; margin-top: 27px; display: flex; align-items: center; gap: 12.5px; padding-left: 19px; }
  .images { margin-top: 26px; }

  .vscroll { width: 25px; flex: none; background: #f0f0f0; display: flex; flex-direction: column; align-items: center; }
  .up { width: 12px; height: 8px; background: #a3a3a3; clip-path: polygon(50% 0, 100% 100%, 0 100%); }
  .dn { width: 12px; height: 8px; background: #4d4d4d; clip-path: polygon(50% 100%, 100% 0, 0 0); margin: auto 0 9px; }
  .thumb { width: 21px; background: #c1c1c1; }
  .s1 .up { margin: 9px 0 8px; }
  .s1 .thumb { height: 295px; }
  .s2 .up { margin: 10px 0 8px; }
  .s2 .thumb { height: 512px; }
  .s3 .up { margin: 9px 0 8px; }
  .s3 .thumb { height: 42px; }

  main { width: 1534px; flex: none; display: flex; flex-direction: column; position: relative; overflow: hidden; }
  .listhead { height: 173px; flex: none; background: #fafafa; border-bottom: 2px solid #eaeded; padding: 17px 30px 0 29px; display: flex; flex-direction: column; }
  .titlerow { display: flex; height: 50px; }
  .h1 { font-size: 25px; font-weight: 700; line-height: 34px; }
  .cnt { margin: 0 12px 0 8px; font-weight: 400; color: #687078; }
  .titlerow .sm { line-height: 41px; }
  .btns { margin-left: auto; display: flex; }
  .btn { height: 41px; border: 1px solid #545b64; border-radius: 3px; background: #fff; color: #545b64; display: flex; align-items: center; justify-content: center; gap: 18px; margin-right: 12px; }
  .btn .b { padding-bottom: 2px; }
  .btn.r { width: 74px; }
  .btn.c { width: 146px; }
  .btn.s { width: 234px; }
  .btn.a { width: 168px; }
  .btn.launch { width: 230px; border: 0; background: #f90; color: #16191f; margin-right: 3px; border-radius: 3px 0 0 3px; padding-left: 5px; }
  .btn.split { width: 44px; border: 0; background: #f90; color: #16191f; margin-right: 0; border-radius: 0 3px 3px 0; }
  .field { border: 1px solid #687078; border-radius: 3px; background: #fff; height: 42px; display: flex; align-items: center; }
  .find { width: 972px; padding-left: 12px; gap: 13px; color: #687078; flex: none; }
  .filterrow { display: flex; margin-top: 12px; }
  .state { width: 1268px; flex: none; padding: 0 17px 0 12px; justify-content: space-between; }
  .state :global(svg) { color: #545b64; }
  .pager { display: flex; align-items: center; height: 30px; padding-left: 33px; color: #545b64; }
  .pager .t { color: #16191f; margin: 0 25px 0 25px; }
  .dim { color: #aab7b8; }
  .pager i { width: 1px; height: 50px; background: #eaeded; margin: 0 19px 0 15px; }

  .row { display: grid; flex: none; grid-template-columns: 80px 210px 300px 240px 225px 225px 195px 200px; overflow: hidden; }
  .thead { height: 49px; background: #fafafa; color: #545b64; align-items: center; }
  .thead .b { padding-bottom: 2px; }
  .trow { height: 48px; background: #f1faff; border: 1px solid #0073bb; border-right: 0; align-items: stretch; }
  .trow .k { margin-left: -1px; }
  .trow .cell:not(.k) { left: -1px; }
  .cell { display: flex; align-items: center; padding-left: 24px; height: 36px; overflow: hidden; position: relative; }
  .trow .cell { height: 45px; }
  .trow .t { padding-bottom: 2px; }
  .trow .after { padding-bottom: 1px; }
  .thead .cell { border-right: 1px solid #687078; height: 36px; border-image: linear-gradient(transparent 3px, #687078 3px 33px, transparent 33px) 1; border-width: 0 1px 0 0; }
  .thead .k { border-image: linear-gradient(transparent 3px, #eaeded 3px 33px, transparent 33px) 1; }
  .cell.k { padding-left: 29px; }
  .thead .cell:last-child { border: 0; border-image: none; }
  .thead :global(.sort) { margin-left: auto; margin-right: 21px; }
  .pen { margin-left: 9px; }
  .after { margin-left: 6px; }
  .zi { margin-left: 17px; color: #545b64; }
  .zo { margin-left: 14px; color: #545b64; }
  .pl { margin-left: 7px; color: #545b64; }
  .hscroll { height: 26px; flex: none; background: #f0f0f0; border-bottom: 2px solid #879596; display: flex; align-items: center; }
  .hthumb { width: 560px; height: 21px; background: #c1c1c1; margin-left: 9px; }
  .lf { width: 7px; height: 12px; margin-left: 8px; background: #a3a3a3; clip-path: polygon(0 50%, 100% 0, 100% 100%); }
  .rt { width: 7px; height: 12px; margin: 0 8px 0 auto; background: #333; clip-path: polygon(100% 50%, 0 0, 0 100%); }
  .spacer { height: 80px; flex: none; background: #f2f3f3; border-bottom: 2px solid #b6bec3; box-shadow: inset 0 2px 2px -1px #c8cfcf; }

  .panel { display: flex; height: 356px; flex: none; background: #fff; }
  .pmain { width: 1509px; flex: none; overflow: hidden; }
  .handle { height: 20px; padding-top: 9px; display: flex; flex-direction: column; align-items: center; gap: 5px; }
  .handle i { width: 18px; height: 3px; background: #545b64; margin-left: 24px; }
  .ptitle { height: 40px; display: flex; align-items: center; padding: 0 39px 0 29px; color: #545b64; }
  .h2 { font-size: 25.2px; font-weight: 600; color: #16191f; padding-bottom: 2px; }
  .iid { margin-left: 7px; }
  .pg { margin-left: auto; }
  .ptitle i { width: 1px; height: 34px; background: #eaeded; margin: 0 16px 0 12px; }
  .ptabs { height: 79px; padding: 32px 0 0 3px; border-bottom: 1px solid #95a5a6; display: flex; color: #545b64; }
  .ptab { height: 33px; display: flex; align-items: center; justify-content: center; border-right: 1px solid #aab7b8; flex: none; }
  .ptab.on { width: 127px; color: #0073bb; position: relative; padding-right: 2px; }
  .ptab.on::after { content: ''; position: absolute; left: 0; right: 0; bottom: -14px; height: 3px; background: #16191f; }
  .sa { width: 282px; gap: 6px; }
  .last { border: 0; padding-left: 31px; }
  .newtag { color: #0073bb; border-bottom: 1px dashed #545b64; margin-top: 5px; height: 26px; }
  .summary { display: flex; align-items: center; gap: 11px; padding-left: 31px; margin-top: 36px; height: 30px; color: #545b64; }
  .summary .blue { color: #0073bb; padding-top: 1px; }
  .cols { display: grid; grid-template-columns: 508px 491px 500px; margin-top: 6px; height: 170px; }
  .col { padding: 15px 0 0 12px; border-left: 1px solid #eaeded; }
  .col:first-child { padding-left: 30px; border: 0; }
  .lab { color: #687078; height: 26px; line-height: 26px; }
  .val { display: flex; align-items: center; height: 40px; padding-left: 7px; }
  .val :global(.grey) { color: #545b64; margin-right: 13px; }
  .two { margin-top: 24px; }
  .st { height: 40px; }
  .green.st { padding-left: 0; }
  .open { display: flex; gap: 7px; }

  .toast { position: absolute; left: 383px; top: 515px; width: 313px; height: 104px; background: #fff; border: 1px solid #d5dbdb; border-radius: 2px; box-shadow: 0 2px 4px rgba(0, 28, 36, .25); padding: 17px 23px; color: #1d8102; }
  .toast::after { content: ''; position: absolute; left: 146px; bottom: -10px; width: 19px; height: 19px; background: #fff; border: solid #d5dbdb; border-width: 0 1px 1px 0; transform: rotate(45deg); box-shadow: 2px 2px 3px rgba(0, 28, 36, .12); }
  .line { height: 33px; display: flex; align-items: center; }

  footer { height: 47px; flex: none; background: #232f3e; border-bottom: 2px solid #4b4a50; color: #fff; display: flex; align-items: center; padding: 0 24px; }
  .f { font-size: 17px; font-weight: 500; }
  .f1 { margin-left: 7px; }
  .f2 { margin-left: 37px; }
  .legal { margin-left: auto; display: flex; }
  .f3 { margin-left: 45px; }
  .f4 { margin-left: 37px; }
  .f5 { margin-left: 37px; }

  .taskbar { height: 70px; flex: none; display: flex; align-items: center; color: #fff; background: linear-gradient(90deg, #201f22 0, #212024 300px, #27211f 440px, #3d1a13 540px, #3f1912 680px, #391820 830px, #2f1a2c 960px, #2d1b2e 1250px, #2f1b3a 1420px, #2e1c3f 1550px, #4a151a 1700px, #43111b 1790px, #341933 1900px); }
  .tb { font-size: 16.8px; line-height: 24px; }
  .dimt { color: #d5d2d6; }
  .weather { display: flex; align-items: center; width: 543px; flex: none; padding-left: 28px; position: relative; }
  .weather b { position: absolute; left: 46px; top: -2px; width: 23px; height: 24px; border-radius: 12px; background: #ff99a4; color: #111; font: 16px/24px 'Open Sans', sans-serif; text-align: center; }
  .weather > div { padding: 0 0 2px 10px; }
  .win { flex: none; }
  .tsearch { position: relative; margin-left: 20px; width: 330px; height: 48px; flex: none; border-radius: 24px; background: rgba(255, 255, 255, .15); border: 1px solid rgba(255, 255, 255, .2); border-top-width: 2px; display: flex; align-items: center; padding: 0 4px 1px 17px; color: #ece6e6; }
  .ts { font-size: 19.5px; margin-left: 16px; color: #dcd3d2; padding-bottom: 1px; }
  .bowls { margin-left: auto; }
  .apps { display: flex; margin-left: 4px; }
  .app { width: 65.8px; height: 60px; display: flex; align-items: center; justify-content: center; position: relative; }
  .snip { width: 60px; margin-left: 3px; background: rgba(255, 255, 255, .07); border: 1px solid rgba(255, 255, 255, .08); border-radius: 6px; }
  .count { position: absolute; left: 31px; top: 4px; width: 31px; height: 25px; border-radius: 12.5px; background: #dd9fe6; color: #111; font: 16.5px/25px 'Open Sans', sans-serif; text-align: center; }
  .bigbrave { transform: scale(1.3); }
  .miniswirl { position: absolute; left: 31px; top: -1px; transform: scale(.7); }
  .dot { position: absolute; bottom: 0; left: 28px; width: 9px; height: 5px; border-radius: 3px; background: #9d979f; }
  .wide { width: 24px; left: 17px; background: #dd9fe6; }
  .tray { margin-left: auto; display: flex; align-items: center; padding-right: 32px; }
  .tray svg { fill: none; stroke: #fff; stroke-width: 2; flex: none; }
  .lang { margin: 2px 26px 0 28px; display: flex; flex-direction: column; align-items: center; }
  .cloud { margin-left: 28px; }
  .vol { margin: 0 12px; }
  .clock { margin: 0 13px 2px 24px; display: flex; flex-direction: column; align-items: flex-end; }
</style>
